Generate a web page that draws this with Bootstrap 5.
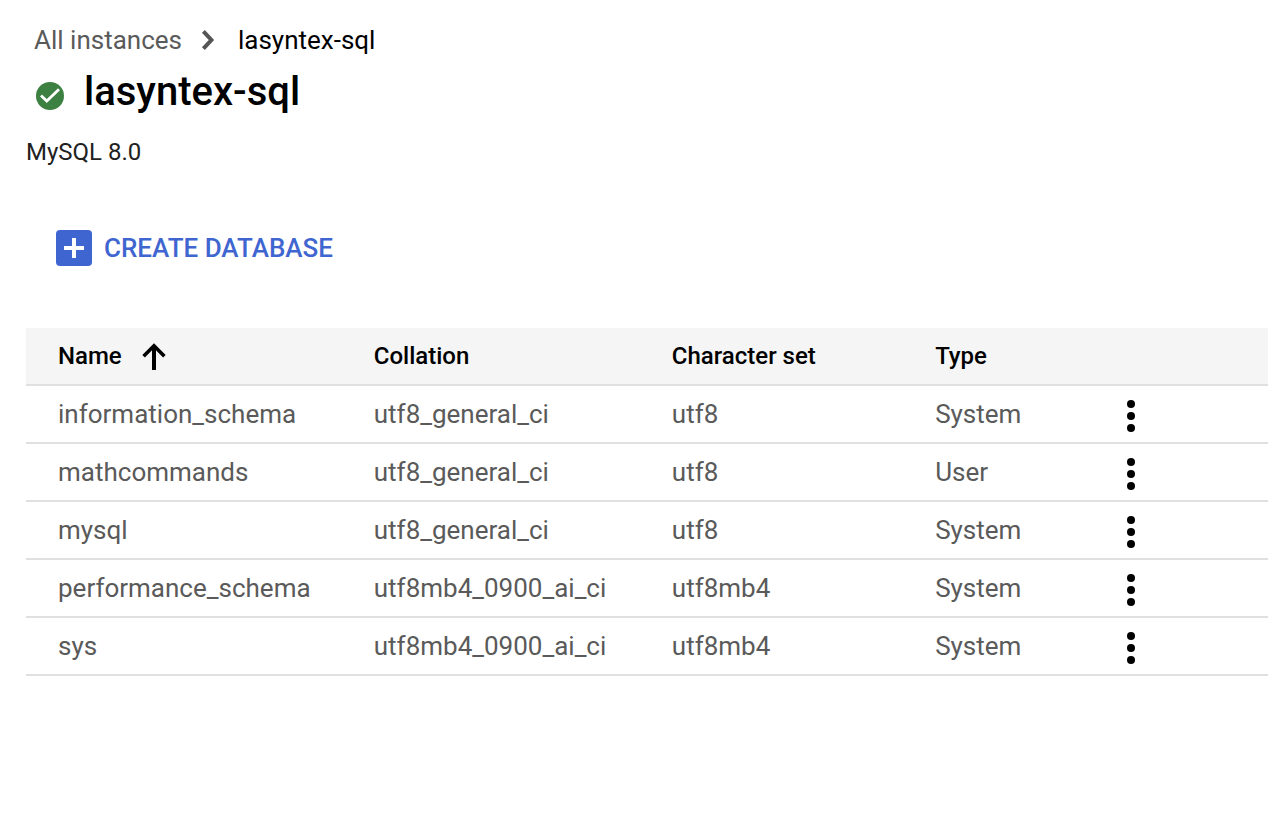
<!DOCTYPE html>
<html lang="en">
<head>
<meta charset="utf-8">
<meta name="viewport" content="width=device-width, initial-scale=1">
<title>lasyntex-sql databases</title>
<link href="https://cdn.jsdelivr.net/npm/bootstrap@5.3.0/dist/css/bootstrap.min.css" rel="stylesheet">
<style>
body { font-family: Roboto, sans-serif; font-size: 26px; line-height: 32px; color: #000; background: #fff; }
.page { padding: 24px 0 0 26px; }
.crumbs { gap: 14px; padding-left: 8px; }
.crumbs a { color: #5a5a5a; }
.title-row { gap: 19px; padding-left: 9px; margin-top: 12px; }
.title-row h1 { font-size: 40px; line-height: 48px; font-weight: 500; }
.title-row svg { margin-top: 8px; }
.engine { font-size: 24px; color: #212121; margin-top: 20px; }
.create { gap: 12px; margin: 62px 0 62px 30px; font-size: 26px; line-height: 36px; font-weight: 500; color: #3f66d0; }
.create:hover { color: #2f54b8; }
.db-table { table-layout: fixed; line-height: 32px; }
.db-table > :not(caption) > * > * { padding: 12px 0; border-bottom: 2px solid #e0e0e0; color: #5a5a5a; background: none; }
.db-table > thead > tr > * { font-size: 24px; font-weight: 500; color: #000; background: #f5f5f5; }
.db-table > :not(caption) > * > :first-child { padding-left: 32px; }
.db-table > tbody > tr > :last-child { padding: 10px 0; }
.c-name { width: 28%; } .c-coll { width: 24%; } .c-set { width: 21.2%; } .c-type { width: 14.5%; }
.sort { gap: 20px; }
</style>
</head>
<body>
<main class="page">
  <nav aria-label="breadcrumb" class="crumbs d-flex align-items-center">
    <a href="#" class="text-decoration-none">All instances</a>
    <svg width="28" height="32" viewBox="0 0 28 32" fill="none" stroke="#555" stroke-width="4" aria-hidden="true"><path d="M7.400 7.400l8 8.600-8 8.600"/></svg>
    <span aria-current="page">lasyntex-sql</span>
  </nav>
  <div class="title-row d-flex align-items-center">
    <svg width="30" height="30" viewBox="0 0 30 30" aria-hidden="true"><circle cx="15" cy="15" r="14" fill="#3c8042"/><path d="M6 14.500l5.800 5.600L24 8.300" fill="none" stroke="#fff" stroke-width="2.800"/></svg>
    <h1 class="m-0">lasyntex-sql</h1>
  </div>
  <div class="engine">MySQL 8.0</div>
  <button type="button" class="create btn border-0 p-0 d-flex align-items-center">
    <svg width="36" height="36" viewBox="0 0 36 36" aria-hidden="true"><rect width="36" height="36" rx="4" fill="#3f66d0"/><path d="M18 8v20M8 18h20" stroke="#fff" stroke-width="4"/></svg>
    CREATE DATABASE
  </button>
  <table class="db-table table m-0">
    <colgroup><col class="c-name"><col class="c-coll"><col class="c-set"><col class="c-type"><col></colgroup>
    <thead><tr>
      <th scope="col" aria-sort="ascending"><span class="sort d-flex align-items-center">Name <svg width="24" height="28" viewBox="0 0 24 28" fill="none" stroke="#000" aria-hidden="true"><path d="M12 28V4" stroke-width="4"/><path d="M1.600 14.200L12 3.800l10.400 10.400" stroke-width="3.600"/></svg></span></th>
      <th scope="col">Collation</th><th scope="col">Character set</th><th scope="col">Type</th><td></td>
    </tr></thead>
    <tbody id="rows"></tbody>
  </table>
</main>
<script>
const databases = [
  ["information_schema", "utf8_general_ci", "utf8", "System"],
  ["mathcommands", "utf8_general_ci", "utf8", "User"],
  ["mysql", "utf8_general_ci", "utf8", "System"],
  ["performance_schema", "utf8mb4_0900_ai_ci", "utf8mb4", "System"],
  ["sys", "utf8mb4_0900_ai_ci", "utf8mb4", "System"]
];
document.getElementById("rows").innerHTML = databases.map(db =>
  "<tr>" + db.map(v => `<td>${v}</td>`).join("") +
  `<td><button type="button" class="btn border-0 p-0 d-block" aria-label="Actions for ${db[0]}"><svg class="d-block" width="32" height="36" viewBox="0 0 32 36" fill="#000"><circle cx="16" cy="8" r="4"/><circle cx="16" cy="20" r="4"/><circle cx="16" cy="32" r="4"/></svg></button></td></tr>`
).join("");
</script>
<script src="https://cdn.jsdelivr.net/npm/bootstrap@5.3.0/dist/js/bootstrap.bundle.min.js"></script>
</body>
</html>
